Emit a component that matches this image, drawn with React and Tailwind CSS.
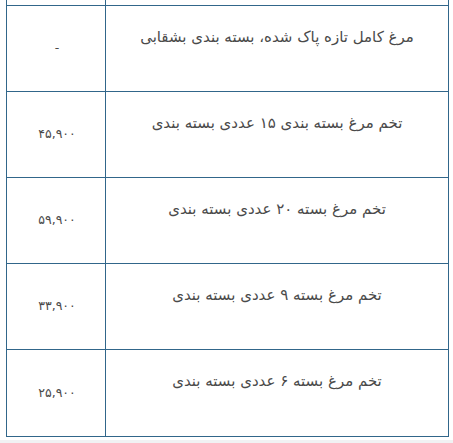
import React from "react";

const rows = [
  { d: "مرغ کامل تازه پاک شده، بسته بندی بشقابی", p: "-" },
  { d: "تخم مرغ بسته بندی ۱۵ عددی بسته بندی", p: "۴۵,۹۰۰" },
  { d: "تخم مرغ بسته ۲۰ عددی بسته بندی", p: "۵۹,۹۰۰" },
  { d: "تخم مرغ بسته ۹ عددی بسته بندی", p: "۳۳,۹۰۰" },
  { d: "تخم مرغ بسته ۶ عددی بسته بندی", p: "۲۵,۹۰۰" },
];

export default function App() {
  return (
    <div className="w-[453px] h-[443px] overflow-hidden bg-[#f1f2f3]" style={{ fontFamily: '"DejaVu Sans", sans-serif' }}>
      <div className="bg-white pl-[6px] pr-[4px] h-[440px] overflow-hidden">
        <div dir="rtl" className="-mt-[20px] border-x-[1.5px] border-b-[1.5px] border-[#31668a]">
          <div className="flex h-[26px] border-b-[1.5px] border-[#31668a]">
            <div className="w-[343px] border-l-[1.5px] border-[#31668a]"></div>
            <div className="flex-1"></div>
          </div>
          {rows.map((r, i) => (
            <div key={i} className={"flex h-[86px] " + (i < rows.length - 1 ? "border-b-[1.5px] border-[#31668a]" : "")}>
              <div className="w-[343px] border-l-[1.5px] border-[#31668a] text-center pt-[19px] text-[15px] leading-[24px] text-[#4a4a4a]">
                {r.d}
              </div>
              <div className="flex-1 flex items-center justify-center pl-[2px] text-[12.5px] text-[#4a4a4a]">
                {r.p}
              </div>
            </div>
          ))}
        </div>
      </div>
    </div>
  );
}
